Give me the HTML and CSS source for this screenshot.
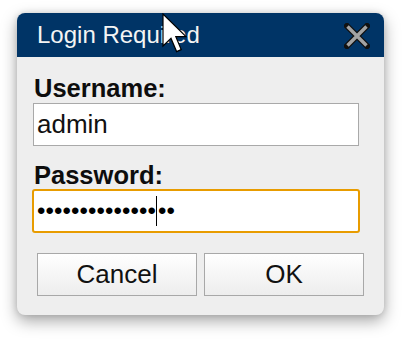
FILE: index.html
```html
<!DOCTYPE html>
<html>
<head>
<meta charset="utf-8">
<link rel="stylesheet" href="styles.css">
</head>
<body>
<div class="dialog">
  <div class="titlebar">
    <span class="title">Login Required</span>
    <svg class="close" width="26" height="26" viewBox="0 0 26 26">
      <path d="M3 3 L23 23 M23 3 L3 23" stroke="#111" stroke-width="6" stroke-linecap="square"/>
      <path d="M3.5 3.5 L22.5 22.5 M22.5 3.5 L3.5 22.5" stroke="#a3a3a3" stroke-width="3.4" stroke-linecap="butt"/>
    </svg>
  </div>
  <div class="body">
    <div class="label">Username:</div>
    <div class="field">admin</div>
    <div class="label label-pw">Password:</div>
    <div class="field field-focus"><span class="dots">••••••••••••••</span><span class="caret"></span><span class="dots">••</span></div>
    <div class="buttons">
      <div class="btn">Cancel</div>
      <div class="btn">OK</div>
    </div>
  </div>
</div>
<svg class="pointer" width="26" height="42" viewBox="0 0 13 21">
  <path d="M0.5 0.5 L0.5 16.5 L4.5 12.7 L7.3 19.3 L9.6 18.3 L6.9 11.8 L12 11.8 Z" fill="#fff" stroke="#000" stroke-width="0.6" stroke-linejoin="miter"/>
</svg>
</body>
</html>
```
FILE: styles.css
```css
html, body {
  margin: 0;
  padding: 0;
  background: #ffffff;
}
body {
  position: relative;
  width: 407px;
  height: 345px;
  overflow: hidden;
  font-family: "Liberation Sans", Arial, sans-serif;
}
.dialog {
  margin: 13px 0 0 17px;
  width: 367px;
  height: 302px;
  background: #eeeeee;
  border-radius: 8px;
  box-shadow: 0 6px 16px rgba(0, 0, 0, 0.35), 0 0 6px rgba(0, 0, 0, 0.12);
  overflow: hidden;
  display: flex;
  flex-direction: column;
}
.titlebar {
  height: 44px;
  background: #003466;
  display: flex;
  align-items: center;
  justify-content: space-between;
  padding: 0 14px 0 20px;
}
.title {
  color: #f4f4f4;
  font-size: 24px;
  line-height: 28px;
}
.close {
  display: block;
  margin-top: 1px;
}
.body {
  padding: 17px 0 0 16px;
  display: flex;
  flex-direction: column;
}
.label {
  font-size: 25.5px;
  line-height: 28px;
  font-weight: bold;
  color: #0d0d0d;
  padding-left: 1px;
  margin-bottom: 1px;
}
.label-pw {
  margin-top: 15px;
  margin-bottom: 0;
}
.field {
  box-sizing: border-box;
  width: 326px;
  height: 43px;
  background: #ffffff;
  border: 1px solid #a9a9a9;
  font-size: 26px;
  line-height: 30px;
  padding: 0 0 1px 3px;
  color: #111;
  display: flex;
  align-items: center;
  align-self: flex-start;
}
.field-focus {
  width: 328px;
  height: 44px;
  margin-left: -1px;
  border: 2px solid #e89c00;
  border-radius: 3px;
  padding: 0 0 0 3px;
}
.dots {
  font-size: 24px;
  letter-spacing: 0.1px;
  line-height: 26px;
  color: #000;
}
.caret {
  display: inline-block;
  width: 1px;
  height: 30px;
  background: #000;
  margin: 0 1px 0 0;
}
.buttons {
  display: flex;
  gap: 7px;
  margin-top: 20px;
  padding-left: 4px;
}
.btn {
  box-sizing: border-box;
  width: 160px;
  height: 43px;
  border: 1px solid #a8a8a8;
  background: linear-gradient(#ffffff, #ededed);
  font-size: 26px;
  color: #111;
  display: flex;
  align-items: center;
  justify-content: center;
}
.pointer {
  position: absolute;
  left: 162px;
  top: 13px;
}
```
